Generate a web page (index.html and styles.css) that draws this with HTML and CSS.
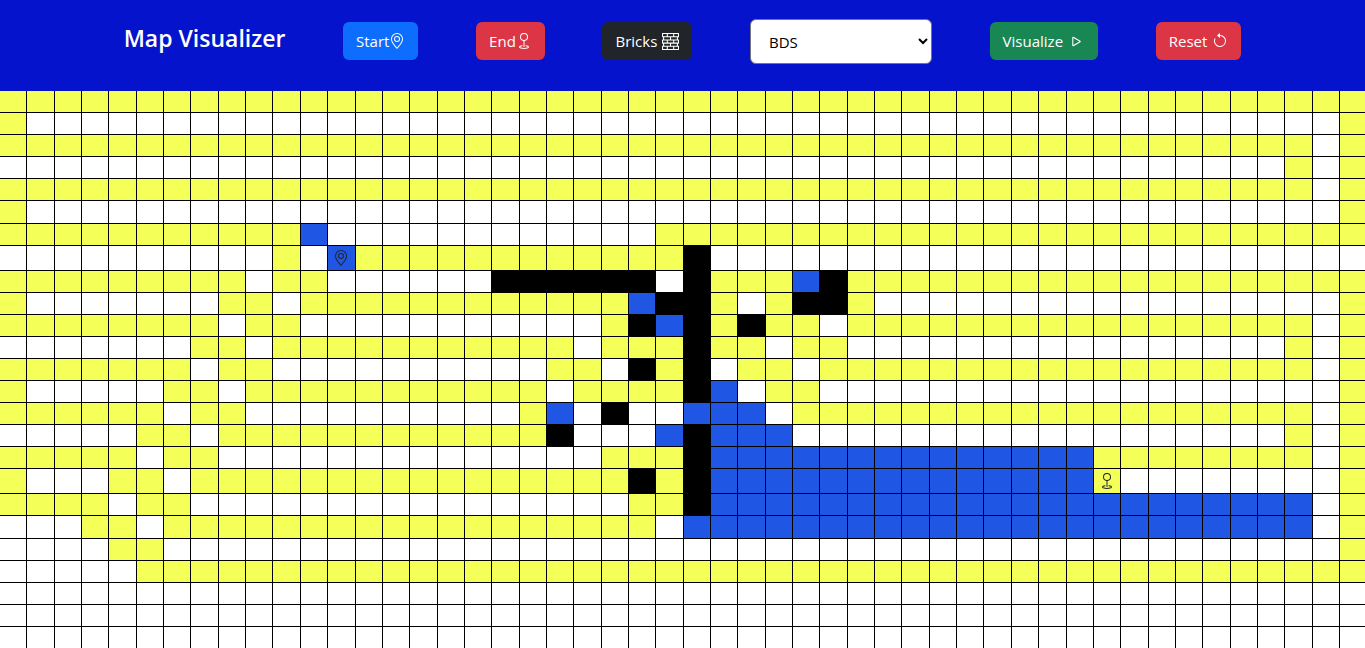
FILE: index.html
```html
<!DOCTYPE html>
<html lang="en">
<head>
  <meta charset="utf-8">
  <meta name="viewport" content="width=device-width, initial-scale=1">
  <title>Map Visualizer</title>
  <link rel="stylesheet" href="styles.css">
</head>
<body>
  <svg class="sprite" aria-hidden="true">
    <symbol id="pin" viewBox="0 0 16 16">
      <path d="M12.166 8.94c-.524 1.062-1.234 2.12-1.96 3.07A32 32 0 0 1 8 14.58a32 32 0 0 1-2.206-2.57c-.726-.95-1.436-2.008-1.96-3.07C3.304 7.867 3 6.862 3 6a5 5 0 0 1 10 0c0 .862-.305 1.867-.834 2.94M8 16s6-5.686 6-10A6 6 0 0 0 2 6c0 4.314 6 10 6 10"/>
      <path d="M8 8a2 2 0 1 1 0-4 2 2 0 0 1 0 4m0 1a3 3 0 1 0 0-6 3 3 0 0 0 0 6"/>
    </symbol>
    <symbol id="goal" viewBox="0 0 16 16">
      <path fill-rule="evenodd" d="M8 1a3 3 0 1 0 0 6 3 3 0 0 0 0-6M4 4a4 4 0 1 1 4.5 3.969V13.5a.5.5 0 0 1-1 0V7.97A4 4 0 0 1 4 3.999zm2.493 8.574a.5.5 0 0 1-.411.575c-.712.118-1.28.295-1.655.493a1.3 1.3 0 0 0-.37.265.3.3 0 0 0-.057.09V14l.002.008.016.033a.6.6 0 0 0 .145.15c.165.13.435.27.813.395.751.25 1.82.414 3.024.414s2.273-.163 3.024-.414c.378-.126.648-.265.813-.395a.6.6 0 0 0 .146-.15l.015-.033L12 14v-.004a.3.3 0 0 0-.057-.09 1.3 1.3 0 0 0-.37-.264c-.376-.198-.943-.375-1.655-.493a.5.5 0 1 1 .164-.986c.77.127 1.452.328 1.957.594C12.5 13 13 13.4 13 14c0 .426-.26.752-.544.977-.29.228-.68.413-1.116.558-.878.293-2.059.465-3.34.465s-2.462-.172-3.34-.465c-.436-.145-.826-.33-1.116-.558C3.26 14.752 3 14.426 3 14c0-.599.5-1 .961-1.243.505-.266 1.187-.467 1.957-.594a.5.5 0 0 1 .575.411"/>
    </symbol>
    <symbol id="bricks" viewBox="0 0 16 16" preserveAspectRatio="none">
      <path fill-rule="evenodd" d="M0 .5A.5.5 0 0 1 .5 0h15a.5.5 0 0 1 .5.5v3a.5.5 0 0 1-.5.5H15v2h.5a.5.5 0 0 1 .5.5v3a.5.5 0 0 1-.5.5H15v2h.5a.5.5 0 0 1 .5.5v3a.5.5 0 0 1-.5.5H.5a.5.5 0 0 1-.5-.5v-3a.5.5 0 0 1 .5-.5H1v-2H.5a.5.5 0 0 1-.5-.5v-3A.5.5 0 0 1 .5 6H1V4H.5a.5.5 0 0 1-.5-.5zM2 4v2h5.500V4zM8.500 4v2H14V4zM2 10v2h5.500v-2zM8.500 10v2H14v-2zM1 1v2h3.500V1zM5.500 1v2h5V1zM11.500 1v2H15V1zM1 7v2h3.500V7zM5.500 7v2h5V7zM11.500 7v2H15V7zM1 13v2h3.500v-2zM5.500 13v2h5v-2zM11.500 13v2H15v-2z"/>
    </symbol>
    <symbol id="play" viewBox="0 0 16 16">
      <path d="M10.804 8 5 4.633v6.734zm.792-.696a.802.802 0 0 1 0 1.392l-6.363 3.692C4.713 12.69 4 12.345 4 11.692V4.308c0-.653.713-.998 1.233-.696z"/>
    </symbol>
    <symbol id="reset" viewBox="0 0 16 16">
      <path fill-rule="evenodd" d="M8 3a5 5 0 1 1-4.546 2.914.5.5 0 0 0-.908-.417A6 6 0 1 0 8 2z"/>
      <path d="M8 4.466V.534a.25.25 0 0 0-.41-.192L5.23 2.308a.25.25 0 0 0 0 .384l2.36 1.966A.25.25 0 0 0 8 4.466"/>
    </symbol>
  </svg>

  <header class="toolbar">
    <h1 class="title">Map Visualizer</h1>
    <button class="btn btn-primary btn-tight" type="button">Start<svg class="icon"><use href="#pin"/></svg></button>
    <button class="btn btn-danger btn-tight" type="button">End<svg class="icon"><use href="#goal"/></svg></button>
    <button class="btn btn-dark" type="button">Bricks<svg class="icon icon-wide"><use href="#bricks"/></svg></button>
    <select class="algorithm" aria-label="Algorithm">
      <option>BDS</option>
      <option>BFS</option>
      <option>DFS</option>
    </select>
    <button class="btn btn-success" type="button">Visualize<svg class="icon icon-wide"><use href="#play"/></svg></button>
    <button class="btn btn-danger" type="button">Reset<svg class="icon"><use href="#reset"/></svg></button>
  </header>

  <main class="map" id="map" aria-label="Map grid"></main>
  <script src="script.js"></script>
</body>
</html>
```
FILE: styles.css
```css
* {
  box-sizing: border-box;
}

body {
  margin: 0;
  height: 100vh;
  display: flex;
  flex-direction: column;
  overflow: hidden;
  background: #fff;
  color: #212529;
  font-family: "Segoe UI", "Open Sans", "Noto Sans", sans-serif;
  font-size: 15px;
  line-height: 24px;
}

.sprite {
  display: none;
}

.toolbar {
  flex: none;
  display: flex;
  justify-content: space-evenly;
  align-items: flex-start;
  padding: 19px 66px 27px;
  background: #0513cd;
}

.title {
  margin: 3px 0 0;
  color: #fff;
  font-size: 23px;
  font-weight: 600;
  line-height: 32px;
  white-space: nowrap;
}

.btn {
  display: flex;
  align-items: center;
  gap: 5px;
  margin: 3px 0 0;
  padding: 7px 13px;
  border: 0;
  border-radius: 6px;
  color: #fff;
  font: inherit;
  cursor: pointer;
}

.btn-tight {
  gap: 0;
}

.btn-primary {
  background: #0d6efd;
}

.btn-danger {
  background: #dc3545;
}

.btn-dark {
  background: #212529;
}

.btn-success {
  background: #198754;
}

.icon {
  display: block;
  flex: none;
  width: 16px;
  height: 16px;
  fill: currentColor;
}

.icon-wide {
  width: 17px;
  height: 17px;
}

.algorithm {
  width: 182px;
  height: 45px;
  padding: 0 0 0 14px;
  border: 1px solid #767676;
  border-radius: 6px;
  background: #fff;
  color: #000;
  font: inherit;
}

.map {
  flex: 1;
  min-height: 0;
  overflow: hidden;
}

.row {
  display: grid;
  grid-template-columns: repeat(49, 1fr) 25px;
  height: 22px;
}

.row-mid {
  height: 23px;
}

.row-tall {
  height: 25px;
}

.cell {
  display: flex;
  align-items: center;
  justify-content: center;
  min-width: 0;
  border-right: 1px solid #000;
  border-bottom: 1px solid #000;
}

.cell:last-child {
  border-right: 0;
}

.visited {
  background: #f4ff58;
}

.queued {
  background: #2056e4;
}

.brick {
  background: #000;
}
```
FILE: script.js
```js
// Each row is a list of runs: Y visited, W open, B queued, K brick, S start, E end.
const rows = [
  "Y50",
  "Y1 W48 Y1",
  "Y48 W1 Y1",
  "W47 Y1 W1 Y1",
  "Y48 W1 Y1",
  "Y1 W48 Y1",
  "Y11 B1 W12 Y26",
  "W10 Y1 W1 S1 Y12 K1 W24",
  "Y9 W1 Y2 W6 K6 W1 K1 Y3 B1 K1 Y19",
  "Y1 W7 Y2 W1 Y12 B1 K2 Y1 W1 Y1 K2 Y1 W17 Y1",
  "Y8 W1 Y2 W11 Y1 K1 B1 K1 Y1 K1 Y2 W1 Y17 W1 Y1",
  "W7 Y2 W1 Y11 W1 Y3 K1 Y2 W1 Y2 W16 Y1 W1 Y1",
  "Y7 W1 Y2 W10 Y2 W1 K1 Y1 K1 W1 Y2 W1 Y18 W1 Y1",
  "Y1 W5 Y2 W1 Y11 W1 Y4 K1 B1 W1 Y2 W19 Y1",
  "Y6 W1 Y2 W10 Y1 B1 W1 K1 W2 B3 W1 Y19 W1 Y1",
  "W5 Y2 W1 Y12 K1 W3 B1 K1 B3 W18 Y1 W1 Y1",
  "Y5 W1 Y2 W14 Y3 K1 B14 Y8 W1 Y1",
  "Y1 W3 Y2 W1 Y16 K1 Y1 K1 B14 E1 W8 Y1",
  "Y4 W1 Y2 W16 Y2 K1 B22 W1 Y1",
  "W3 Y2 W1 Y18 W1 B23 W1 Y1",
  "W4 Y2 W43 Y1",
  "W5 Y45",
  "W50",
  "W50",
  "W50"
];

const classes = { Y: "visited", W: "open", B: "queued", K: "brick", S: "queued", E: "visited" };
const icons = { S: "pin", E: "goal" };
const rowClasses = { 5: "row-mid", 7: "row-tall", 17: "row-tall", 19: "row-mid" };

document.getElementById("map").innerHTML = rows.map((runs, index) => {
  const cells = runs.split(" ").map(run => {
    const kind = run[0];
    const icon = icons[kind] ? `<svg class="icon"><use href="#${icons[kind]}"/></svg>` : "";
    return `<div class="cell ${classes[kind]}">${icon}</div>`.repeat(Number(run.slice(1)));
  }).join("");
  return `<div class="row ${rowClasses[index] || ""}">${cells}</div>`;
}).join("");
```
